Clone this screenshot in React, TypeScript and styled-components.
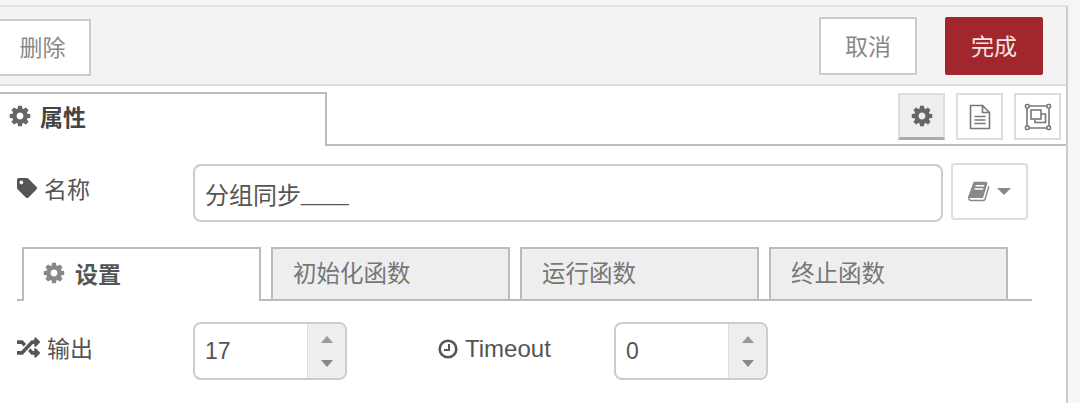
import React from "react";
import styled, { createGlobalStyle } from "styled-components";
import { FaRandom, FaTag } from "react-icons/fa";

const GlobalStyle = createGlobalStyle`
  html, body {
    margin: 0;
    padding: 0;
    background: #f6f6f6;
  }
  * {
    box-sizing: border-box;
  }
`;

const Page = styled.div`
  width: 1080px;
  height: 403px;
  overflow: hidden;
  padding-top: 5px;
  font-family: "Liberation Sans", "Noto Sans CJK SC", sans-serif;
  font-size: 23px;
  color: #555;
`;

const Tray = styled.div`
  width: 1068px;
  height: 398px;
  background: #fff;
  border-right: 2px solid #ccc;
  border-top: 2px solid #e3e3e3;
`;

const Toolbar = styled.div`
  height: 79px;
  display: flex;
  align-items: flex-start;
  padding: 10px 23px 0 0;
  background: #f3f3f3;
  border-bottom: 2px solid #ddd;
`;

const DeleteButton = styled.div`
  width: 102px;
  height: 57px;
  margin: 2px auto 0 -11px;
  display: flex;
  align-items: center;
  justify-content: center;
  padding: 0 0 3px 5px;
  background: #fff;
  border: 2px solid #ccc;
  color: #888;
`;

const CancelButton = styled.div`
  width: 98px;
  height: 58px;
  display: flex;
  align-items: center;
  justify-content: center;
  padding-bottom: 2px;
  background: #fff;
  border: 2px solid #ccc;
  border-radius: 1px;
  color: #888;
`;

const DoneButton = styled.div`
  width: 98px;
  height: 58px;
  margin-left: 28px;
  display: flex;
  align-items: center;
  justify-content: center;
  padding-bottom: 2px;
  background: #a1272c;
  border-radius: 2px;
  color: #f3e6e6;
`;

const HeaderRow = styled.div`
  height: 60px;
  display: flex;
  align-items: flex-start;
  padding-top: 6px;
  border-bottom: 2px solid #bbb;
`;

const MainTab = styled.div`
  width: 329px;
  height: 54px;
  margin: 0 0 -2px -2px;
  display: flex;
  align-items: center;
  gap: 8px;
  padding: 0 0 8px 8px;
  background: #fff;
  border: 2px solid #bbb;
  border-bottom: none;
  font-weight: bold;
  color: #444;
  position: relative;
  z-index: 1;
  & svg {
    color: #666;
  }
`;

const SideButtons = styled.div`
  margin-left: auto;
  margin-right: 5px;
  display: flex;
  gap: 11px;
  padding-top: 1px;
`;

const SideButton = styled.div<{ $active?: boolean }>`
  width: 47px;
  height: 47px;
  display: flex;
  align-items: center;
  justify-content: center;
  background: ${(p) => (p.$active ? "#eee" : "#fff")};
  border: 2px solid #ddd;
  border-bottom: ${(p) => (p.$active ? "3px solid #aaa" : "2px solid #ddd")};
  color: #666;
`;

const Content = styled.div`
  padding: 17px 0 0 17px;
`;

const Row = styled.div`
  display: flex;
  align-items: flex-start;
`;

const Label = styled.div<{ $width: number; $top?: number; $left?: number }>`
  width: ${(p) => p.$width}px;
  height: 50px;
  margin-left: ${(p) => p.$left ?? 0}px;
  padding-top: ${(p) => p.$top ?? 0}px;
  display: flex;
  align-items: center;
  gap: 7px;
  color: #555;
  & svg {
    color: #555;
  }
`;

const TimeoutText = styled.span`
  font-size: 24px;
`;

const NameInput = styled.div`
  width: 750px;
  height: 58px;
  margin-top: 1px;
  display: flex;
  align-items: center;
  padding-left: 10px;
  background: #fff;
  border: 2px solid #ccc;
  border-radius: 8px;
  font-size: 24px;
  color: #555;
`;

const Underscores = styled.span`
  font-size: 21.5px;
  align-self: center;
  padding-top: 3px;
`;

const LibraryButton = styled.div`
  width: 77px;
  height: 57px;
  margin-left: 8px;
  display: flex;
  align-items: center;
  justify-content: center;
  gap: 6px;
  background: #fff;
  border: 2px solid #ddd;
  border-radius: 4px;
  color: #888;
`;

const Caret = styled.span`
  width: 0;
  height: 0;
  border-left: 7px solid transparent;
  border-right: 7px solid transparent;
  border-top: 7px solid #888;
`;

const SubTabs = styled.div`
  width: 1015px;
  height: 54px;
  margin-top: 25px;
  display: flex;
  align-items: flex-end;
  gap: 10px;
  padding-left: 5px;
  border-bottom: 2px solid #bbb;
`;

const SubTab = styled.div<{ $active?: boolean }>`
  width: 239px;
  height: 54px;
  margin-bottom: -2px;
  display: flex;
  align-items: center;
  gap: 9px;
  padding: 0 0 5px ${(p) => (p.$active ? 18 : 20)}px;
  background: ${(p) => (p.$active ? "#fff" : "#eee")};
  border: 2px solid #bbb;
  border-bottom: ${(p) => (p.$active ? "none" : "2px solid #bbb")};
  font-size: ${(p) => (p.$active ? 23 : 23.5)}px;
  font-weight: ${(p) => (p.$active ? "bold" : "normal")};
  color: ${(p) => (p.$active ? "#555" : "#777")};
  & svg {
    color: #888;
  }
`;

const FieldRow = styled(Row)`
  margin-top: 21px;
`;

const Spinner = styled.div`
  width: 154px;
  height: 58px;
  display: flex;
  background: #fff;
  border: 2px solid #ccc;
  border-radius: 8px;
  overflow: hidden;
`;

const SpinnerValue = styled.div`
  flex: 1;
  display: flex;
  align-items: center;
  padding-left: 10px;
  color: #555;
`;

const SpinnerArrows = styled.div`
  width: 38px;
  display: flex;
  flex-direction: column;
  align-items: center;
  justify-content: center;
  gap: 17px;
  background: #eee;
  border-left: 1px solid #ddd;
`;

const Arrow = styled.span<{ $up?: boolean }>`
  width: 0;
  height: 0;
  border-left: 6.5px solid transparent;
  border-right: 6.5px solid transparent;
  ${(p) => (p.$up ? "border-bottom: 7px solid #999;" : "border-top: 7px solid #888;")}
`;

const GearIcon = () => (
  <svg width="24" height="24" viewBox="0 0 1792 1792" fill="currentColor">
    <path d="M1152 896q0-106-75-181t-181-75-181 75-75 181 75 181 181 75 181-75 75-181zm512-109v222q0 12-8 23t-20 13l-185 28q-19 54-39 91 35 50 107 138 10 12 10 25t-9 23q-27 37-99 108t-94 71q-12 0-26-9l-138-108q-44 23-91 38-16 136-29 186-7 28-36 28h-222q-14 0-24.5-8.5t-11.5-21.5l-28-184q-49-16-90-37l-141 107q-10 9-25 9-14 0-25-11-126-114-165-168-7-10-7-23 0-12 8-23 15-21 51-66.5t54-70.5q-27-50-41-99l-183-27q-13-2-21-12.5t-8-23.5v-222q0-12 8-23t19-13l186-28q14-46 39-92-40-57-107-138-10-12-10-24 0-10 9-23 26-36 98.5-107.5t94.5-71.5q13 0 26 10l138 107q44-23 91-38 16-136 29-186 7-28 36-28h222q14 0 24.5 8.5t11.5 21.5l28 184q49 16 90 37l142-107q9-9 24-9 13 0 25 10 129 119 165 170 7 8 7 22 0 12-8 23-15 21-51 66.5t-54 70.5q26 50 41 98l183 28q13 2 21 12.5t8 23.5z" />
  </svg>
);

const BookIcon = () => (
  <svg width="23" height="23" viewBox="0 0 1792 1792" fill="currentColor">
    <path d="M1639 478q40 57 18 129l-275 906q-19 64-76.5 107.5t-122.5 43.5h-923q-77 0-148.5-53.5t-99.5-131.5q-24-67-2-127 0-4 3-27t4-37q1-8-3-21.5t-3-19.5q2-11 8-21t16.5-23.5 16.5-23.5q23-38 45-91.5t30-91.5q3-10 .5-30t-.5-28q3-11 17-28t17-23q21-36 42-92t25-90q1-9-2.5-32t.5-28q4-13 22-30.5t22-22.5q19-26 42.5-84.5t27.5-96.5q1-8-3-25.5t-2-26.5q2-8 9-18t18-23 17-21q8-12 16.5-30.5t15-35 16-36 19.5-32 26.5-23.5 36-11.5 47.5 5.5l-1 3q38-9 51-9h761q74 0 114 56t18 130l-274 906q-36 119-71.5 153.5t-128.5 34.5h-869q-27 0-38 15-11 16-1 43 24 70 144 70h923q29 0 56-15.5t35-41.5l300-987q7-22 5-57 38 15 59 43zm-1064 2q-4 13 2 22.5t20 9.5h608q13 0 25.5-9.5t16.5-22.5l21-64q4-13-2-22.5t-20-9.5h-608q-13 0-25.5 9.5t-16.5 22.5zm-83 256q-4 13 2 22.5t20 9.5h608q13 0 25.5-9.5t16.5-22.5l21-64q4-13-2-22.5t-20-9.5h-608q-13 0-25.5 9.5t-16.5 22.5z" />
  </svg>
);

const ClockIcon = () => (
  <svg width="20" height="20" viewBox="0 0 20 20" fill="none" stroke="currentColor" strokeWidth="2.6">
    <circle cx="10" cy="10" r="8.3" />
    <path d="M11 5v6H6" strokeWidth="2" />
  </svg>
);

const PageIcon = () => (
  <svg width="22" height="26" viewBox="0 0 22 26" fill="none" stroke="#777" strokeWidth="1.6">
    <path d="M1.5 1.5h12l7 7v16h-19z" />
    <path d="M13.5 1.5v7h7" />
    <path d="M5.5 12.5h11M5.5 16h11M5.5 19.5h11" />
  </svg>
);

const FrameIcon = () => (
  <svg width="28" height="28" viewBox="0 0 28 28" fill="none" stroke="#777" strokeWidth="1.6">
    <path d="M3 5v18M5 3h18M25 5v18M5 25h18" />
    <rect x="1.5" y="1.5" width="3.5" height="3.5" rx="1" />
    <rect x="23" y="1.5" width="3.5" height="3.5" rx="1" />
    <rect x="1.5" y="23" width="3.5" height="3.5" rx="1" />
    <rect x="23" y="23" width="3.5" height="3.5" rx="1" />
    <rect x="7" y="7" width="10" height="9" />
    <path d="M17 11h4.5v8.5H11V16" />
  </svg>
);

const NumberField = ({ value }: { value: string }) => (
  <Spinner>
    <SpinnerValue>{value}</SpinnerValue>
    <SpinnerArrows>
      <Arrow $up />
      <Arrow />
    </SpinnerArrows>
  </Spinner>
);

export default function App() {
  return (
    <Page>
      <GlobalStyle />
      <Tray>
        <Toolbar>
          <DeleteButton>删除</DeleteButton>
          <CancelButton>取消</CancelButton>
          <DoneButton>完成</DoneButton>
        </Toolbar>
        <HeaderRow>
          <MainTab>
            <GearIcon />
            属性
          </MainTab>
          <SideButtons>
            <SideButton $active>
              <GearIcon />
            </SideButton>
            <SideButton>
              <PageIcon />
            </SideButton>
            <SideButton>
              <FrameIcon />
            </SideButton>
          </SideButtons>
        </HeaderRow>
        <Content>
          <Row>
            <Label $width={176}>
              <FaTag size={20} />
              名称
            </Label>
            <NameInput>
              分组同步
              <Underscores>____</Underscores>
            </NameInput>
            <LibraryButton>
              <BookIcon />
              <Caret />
            </LibraryButton>
          </Row>
          <SubTabs>
            <SubTab $active>
              <GearIcon />
              设置
            </SubTab>
            <SubTab>初始化函数</SubTab>
            <SubTab>运行函数</SubTab>
            <SubTab>终止函数</SubTab>
          </SubTabs>
          <FieldRow>
            <Label $width={176}>
              <FaRandom size={23} />
              输出
            </Label>
            <NumberField value="17" />
            <Label $width={176} $left={91} $top={4}>
              <ClockIcon />
              <TimeoutText>Timeout</TimeoutText>
            </Label>
            <NumberField value="0" />
          </FieldRow>
        </Content>
      </Tray>
    </Page>
  );
}
